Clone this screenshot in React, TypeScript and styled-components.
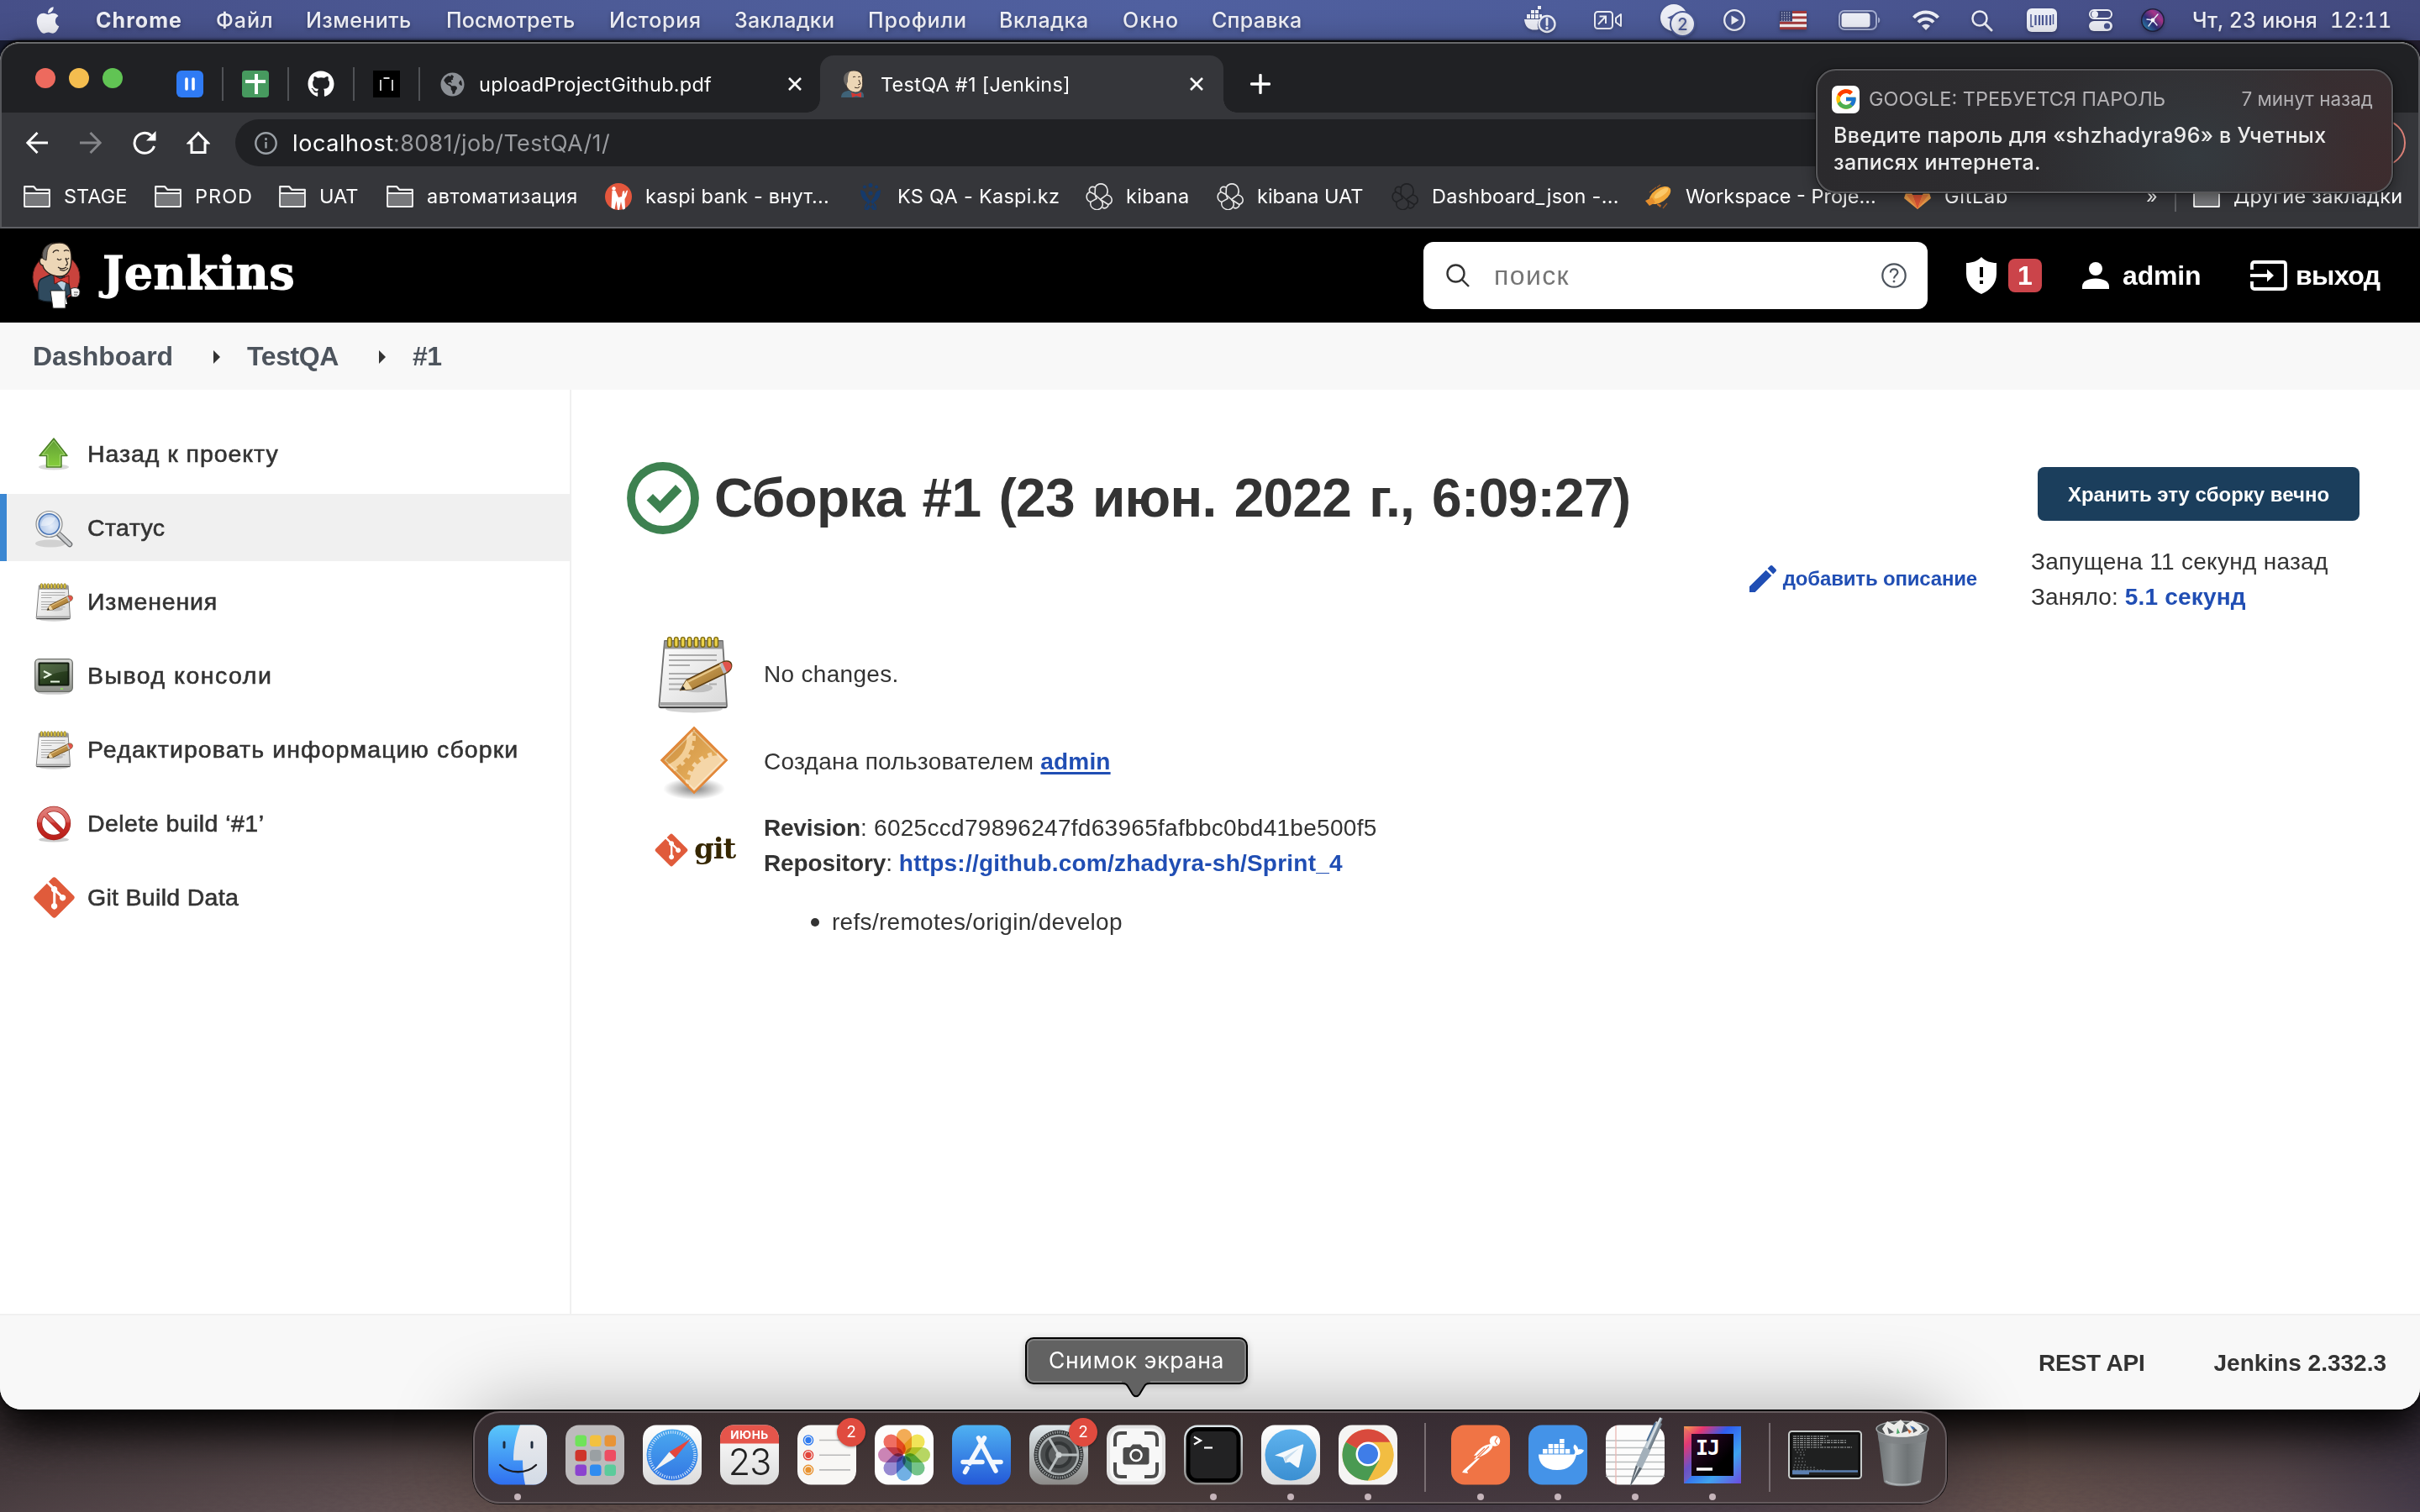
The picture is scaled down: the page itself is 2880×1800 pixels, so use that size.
import React from "react";
import styled, { createGlobalStyle, css } from "styled-components";
import { FaApple, FaGithub, FaGitAlt, FaGlobeAmericas } from "react-icons/fa";
import { FcGoogle } from "react-icons/fc";

const ui = `"Inter", "Noto Sans", sans-serif`;
const web = `"Liberation Sans", Arial, sans-serif`;

const GlobalStyle = createGlobalStyle`
  * { box-sizing: border-box; }
  html, body { margin: 0; padding: 0; }
  body { width: 2880px; height: 1800px; overflow: hidden; background: #2a2226; }
  svg { display: block; flex: none; }
`;

/* ---------- shared ---------- */

const Label = styled.span<{ $ls?: number; $w?: number; $ml?: number }>`
  flex: none;
  white-space: nowrap;
  letter-spacing: ${(p) => p.$ls ?? 0}px;
  ${(p) => p.$w && css`width: ${p.$w}px;`}
  ${(p) => p.$ml && css`margin-left: ${p.$ml}px;`}
`;

const Slot = styled.span<{ $w: number; $h?: number; $ml?: number }>`
  flex: none;
  display: flex;
  align-items: center;
  justify-content: center;
  width: ${(p) => p.$w}px;
  height: ${(p) => p.$h ?? p.$w}px;
  margin-left: ${(p) => p.$ml ?? 0}px;
`;

const Desktop = styled.div`
  position: relative;
  width: 2880px;
  height: 1800px;
  display: flex;
  flex-direction: column;
  overflow: hidden;
  background: linear-gradient(90deg, #1a1e33 0, #241f30 100%);
  font-family: ${ui};
`;

const Ground = styled.div`
  position: absolute;
  left: 0;
  right: 0;
  bottom: 0;
  height: 180px;
  background:
    linear-gradient(180deg, rgba(0, 0, 0, 0.35) 30%, rgba(0, 0, 0, 0) 100%),
    linear-gradient(90deg, #4b3f42 0, #5f5052 14%, #6d5955 22%, #715a54 36%, #6b5753 46%, #4f4450 57%, #594a54 72%, #68544f 84%, #5c4c50 94%, #453b4a 100%);
`;

/* ---------- menu bar ---------- */

const MenuBar = styled.header`
  flex: none;
  height: 48px;
  display: flex;
  align-items: center;
  padding-left: 43px;
  color: #f0f1f7;
  font-size: 25px;
  font-weight: 500;
  text-shadow: 0 2px 5px rgba(0, 0, 0, 0.3);
  background: linear-gradient(90deg, #464f88 0, #4d5b97 25%, #5060a0 48%, #4d5c9a 65%, #464f88 88%, #434a7e 100%);
`;

const AppName = styled(Label)`
  font-weight: 700;
`;

const Clock = styled(Label)`
  font-variant-numeric: tabular-nums;
`;

const StatusIcon = styled.svg<{ $ml: number }>`
  margin-left: ${(p) => p.$ml}px;
  overflow: visible;
  filter: drop-shadow(0 2px 2px rgba(0, 0, 0, 0.25));
`;

const menus: [string, number, number][] = [
  ["Файл", 107, 1],
  ["Изменить", 167, 0.4],
  ["Посмотреть", 194, 0.15],
  ["История", 149, 0.76],
  ["Закладки", 159, 0.21],
  ["Профили", 156, 0.85],
  ["Вкладка", 147, 0.49],
  ["Окно", 106, 0.97],
  ["Справка", 372, 0.29],
];

function TopBar() {
  return (
    <MenuBar>
      <Slot $w={28} $h={40}>
        <FaApple size={36} color="#f0f1f7" />
      </Slot>
      <AppName $ml={43} $w={143} $ls={1.05}>Chrome</AppName>
      {menus.map(([t, w, ls]) => (
        <Label key={t} $w={w} $ls={ls}>{t}</Label>
      ))}
      <StatusIcon $ml={0} width="38" height="32" viewBox="0 0 38 32">
        <g fill="#eceef6">
          <path d="M0 15h18a12 12 0 0 0-1 12c-9 2-16-1-17-12z" />
          <path d="M3 9h4v5H3zM8 9h4v5H8zM13 9h4v5h-4zM8 4h4v4H8zM13 4h4v4h-4zM16 -1h4v4h-4zM18 9h3v4h-3z" />
        </g>
        <circle cx="27" cy="20.5" r="9.5" fill="#4d5c99" stroke="#eceef6" strokeWidth="2.4" />
        <path d="M27 14.5v7" stroke="#eceef6" strokeWidth="2.8" strokeLinecap="round" />
        <circle cx="27" cy="25.5" r="1.7" fill="#eceef6" />
      </StatusIcon>
      <StatusIcon $ml={45} width="33" height="22" viewBox="0 0 33 22" fill="none" stroke="#eceef6" strokeWidth="2">
        <rect x="1" y="1" width="21" height="20" rx="3.5" />
        <path d="M5 16 13 7.5M6.5 6.5H14V15" />
        <path d="M26 8.5 32 4v14l-6-4.5z" strokeLinejoin="round" />
      </StatusIcon>
      <StatusIcon $ml={46} width="40" height="36" viewBox="0 0 40 36">
        <circle cx="16" cy="15" r="16" fill="#eceef6" />
        <path d="M8 15 24 8l-3 14-6-4z" fill="#4d5a96" />
        <circle cx="26.5" cy="22.5" r="14.5" fill="#eceef6" stroke="#4c5a96" strokeWidth="2" />
        <text x="26.5" y="30" textAnchor="middle" fontFamily="Inter" fontSize="20" fill="#4c5a96">2</text>
      </StatusIcon>
      <StatusIcon $ml={35} width="26" height="26" viewBox="0 0 26 26">
        <circle cx="13" cy="13" r="11.8" fill="none" stroke="#eceef6" strokeWidth="2.3" />
        <path d="M9.5 7.5 18.5 13l-9 5.5z" fill="#eceef6" />
      </StatusIcon>
      <StatusIcon $ml={41} width="32" height="22" viewBox="0 0 32 22">
        <rect width="32" height="22" fill="#f4f1f2" />
        {[0, 2, 4, 6].map((i) => (
          <rect key={i} y={i * 3.2} width="32" height="3" fill="#a33a3c" />
        ))}
        <rect width="15" height="12.5" fill="#3b4474" />
        {[2, 5, 8, 11].map((y) =>
          [2, 5, 8, 11].map((x) => <rect key={`${x}-${y}`} x={x} y={y - 0.5} width="1.2" height="1.2" fill="#cfd3e6" />)
        )}
      </StatusIcon>
      <StatusIcon $ml={38} width="50" height="24" viewBox="0 0 50 24">
        <rect x="1" y="1" width="44" height="22" rx="6" fill="none" stroke="#a4add0" strokeWidth="2" />
        <rect x="3.5" y="3.5" width="34" height="17" rx="3.5" fill="#eceef6" />
        <path d="M47 8.500c3 .5 3 6.500 0 7z" fill="#a4add0" />
      </StatusIcon>
      <StatusIcon $ml={38} width="32" height="24" viewBox="0 0 32 24" fill="none" stroke="#eceef6" strokeWidth="4">
        <path d="M1.500 9c8-8.700 21-8.700 29 0" />
        <path d="M7 14.500c5-5.300 13-5.300 18 0" />
        <path d="M16 24l-5-5.300c3-2.700 7-2.700 10 0z" fill="#eceef6" stroke="none" />
      </StatusIcon>
      <StatusIcon $ml={38} width="25" height="25" viewBox="0 0 25 25" fill="none" stroke="#eceef6" strokeWidth="2.5">
        <circle cx="10" cy="10" r="8.5" />
        <path d="m16 16 8 8" strokeLinecap="round" strokeWidth="3" />
      </StatusIcon>
      <StatusIcon $ml={41} width="36" height="28" viewBox="0 0 36 28">
        <rect width="36" height="28" rx="6" fill="#eceef6" />
        <path d="M10.500 8v12M15 8v12M19 8v12M23.500 8v12M28 8v12" stroke="#4b5794" strokeWidth="2.2" />
        <path d="M5 7v14.500h3M31.500 7v12" stroke="#4b5794" strokeWidth="1.5" fill="none" />
      </StatusIcon>
      <StatusIcon $ml={38} width="28" height="26" viewBox="0 0 28 26">
        <rect x="1" y="1" width="26" height="10" rx="5" fill="none" stroke="#eceef6" strokeWidth="2" />
        <circle cx="7" cy="6" r="4" fill="#eceef6" />
        <rect y="14" width="28" height="12" rx="6" fill="#eceef6" />
        <circle cx="21.5" cy="20" r="3.6" fill="#48538e" />
      </StatusIcon>
      <StatusIcon $ml={34} width="28" height="28" viewBox="0 0 28 28">
        <defs>
          <linearGradient id="siri" x1="0" y1="1" x2="1" y2="0">
            <stop offset="0" stopColor="#2e9fc0" />
            <stop offset=".4" stopColor="#2a3078" />
            <stop offset=".7" stopColor="#a83488" />
            <stop offset="1" stopColor="#3a48a8" />
          </linearGradient>
        </defs>
        <circle cx="14" cy="14" r="14" fill="#20203c" />
        <circle cx="14" cy="14" r="12.5" fill="url(#siri)" />
        <path d="M14 14 20 7M14 14 9 21M14 14l5 6M14 14 7 13" stroke="#e8f3ff" strokeWidth="1.4" strokeLinecap="round" />
        <circle cx="14" cy="14" r="2.4" fill="#fff" />
      </StatusIcon>
      <Clock $ml={33} $w={164} $ls={0.1}>Чт, 23 июня</Clock>
      <Clock $ls={0.4}>12:11</Clock>
    </MenuBar>
  );
}

/* ---------- browser window ---------- */

const Window = styled.section`
  position: relative;
  flex: none;
  width: 2880px;
  height: 1630px;
  display: flex;
  flex-direction: column;
  border-top: 2px solid #08080a;
  border-radius: 24px 24px 26px 26px;
  background: #f8f8f8;
  overflow: hidden;
  box-shadow: 0 26px 52px rgba(0, 0, 0, 0.96), 0 0 4px #000;
`;

const ChromeTop = styled.div`
  flex: none;
  height: 222px;
  display: flex;
  flex-direction: column;
  color: #fff;
  background: #202124;
  border: 2px solid #68696b;
  border-left-color: #55565a;
  border-right-color: #55565a;
  border-bottom-color: #5f6064;
  border-radius: 22px 22px 0 0;
`;

const TabStrip = styled.div`
  flex: none;
  height: 82px;
  padding: 14px 0 0 40px;
  display: flex;
  align-items: center;
  font-size: 23.5px;
`;

const Lights = styled.div`
  display: flex;
  gap: 16px;
  margin: -14px 42px 0 0;
`;

const Light = styled.span<{ $c: string }>`
  width: 24px;
  height: 24px;
  border-radius: 50%;
  background: ${(p) => p.$c};
`;

const Pinned = styled.div`
  display: flex;
  align-items: center;
  width: 78px;
  padding-left: 22px;
  &::after {
    content: "";
    width: 2px;
    height: 40px;
    margin-left: 22px;
    background: #505256;
  }
`;

const PinTile = styled.span<{ $c: string; $r: number }>`
  flex: none;
  width: 32px;
  height: 32px;
  border-radius: ${(p) => p.$r}px;
  display: flex;
  align-items: center;
  justify-content: center;
  background: ${(p) => p.$c};
`;

const IdleTab = styled.div`
  display: flex;
  align-items: center;
  padding: 0 22px 0 24px;
`;

const ActiveTab = styled.div`
  position: relative;
  align-self: stretch;
  width: 480px;
  padding-left: 25px;
  display: flex;
  align-items: center;
  background: #35363a;
  border-radius: 16px 16px 0 0;
  &::before,
  &::after {
    content: "";
    position: absolute;
    bottom: 0;
    width: 16px;
    height: 16px;
  }
  &::before {
    left: -16px;
    background: radial-gradient(circle at 0 0, transparent 15.5px, #35363a 16px);
  }
  &::after {
    right: -16px;
    background: radial-gradient(circle at 100% 0, transparent 15.5px, #35363a 16px);
  }
`;

const Toolbar = styled.div`
  flex: none;
  height: 72px;
  padding-left: 10px;
  display: flex;
  align-items: center;
  background: #35363a;
`;

const Omnibox = styled.div`
  width: 2220px;
  height: 56px;
  margin-left: 12px;
  padding-left: 23px;
  display: flex;
  align-items: center;
  border-radius: 28px;
  background: #202124;
  font-size: 27px;
`;

const Dim = styled(Label)`
  color: #9a9ca0;
`;

const UpdatePill = styled.div`
  margin-left: auto;
  margin-right: 15px;
  width: 260px;
  height: 56px;
  border: 2px solid #e0837a;
  border-radius: 28px;
`;

const Bookmarks = styled.div`
  flex: 1;
  padding: 0 0 9px 26px;
  display: flex;
  align-items: center;
  background: #35363a;
  font-size: 23.5px;
  line-height: 28px;
`;

const Bookmark = styled.div<{ $w: number }>`
  flex: none;
  width: ${(p) => p.$w}px;
  display: flex;
  align-items: center;
  gap: 16px;
`;

const Divider = styled.span`
  width: 2px;
  height: 36px;
  margin: 0 20px 0 18px;
  background: #5f6064;
`;

const CloseIcon = () => (
  <svg width="16" height="16" viewBox="0 0 16 16" stroke="#fff" strokeWidth="2.6">
    <path d="M1 1l14 14M15 1 1 15" />
  </svg>
);

const Folder = () => (
  <svg width="32" height="26" viewBox="0 0 32 26">
    <path d="M1.200 24.800V1.200h11l3 3.600h15.600v20z" fill="#35363a" stroke="#f1f1f1" strokeWidth="2.2" strokeLinejoin="round" />
    <path d="M2.500 10h27v13.500h-27z" fill="#77787b" />
    <path d="M1.500 9h29" stroke="#f1f1f1" strokeWidth="2" />
  </svg>
);

const Cluster = ({ c }: { c: string }) => (
  <svg width="32" height="32" viewBox="0 0 32 32" fill="none" stroke={c} strokeWidth="1.6">
    <path d="M11 13.500 11.500 5c2.500-5.500 10.500-5.500 13.500 0 1.500 3 1.500 6 0 9l-7.500 5.500z" />
    <path d="M11 13.500 5 10.500C3 6.500 6 3 11.500 5" />
    <path d="M5 10.500C-.5 13 0 20.500 6 22.500l7-4-2-5" />
    <path d="M6 22.500c-2 7.500 9 13 13.500 5.500 1.500-3 1-6-2-8.500" />
    <path d="M25 14c7 1 8.500 9 2 11.500l-9.500-6" />
    <path d="M27 25.500c0 3.500-4 5.500-7 3.500" />
  </svg>
);

const bookmarkIcons: Record<string, React.ReactNode> = {
  folder: <Folder />,
  kaspi: (
    <svg width="32" height="32" viewBox="0 0 32 32">
      <circle cx="16" cy="16" r="16" fill="#e4573d" />
      <g fill="#fff">
        <circle cx="10.5" cy="6.5" r="2.2" />
        <path d="M8.500 9h4l3.500 8 4-1 1-6 2-1 .5 4 2.500-4.500 1 .5-1.500 6-2 4 .5 11.500c-1.500.7-2.500 1-3 1L19 22l-2 9.800h-2L13.500 21 11.500 31c-1.500-.3-3-1-4-1.700L8 18z" />
      </g>
    </svg>
  ),
  jira: (
    <svg width="32" height="32" viewBox="0 0 32 32" fill="#153a6b">
      <circle cx="16" cy="2.5" r="2.5" />
      <circle cx="9" cy="4.5" r="2" />
      <circle cx="23" cy="4.5" r="2" />
      <path d="M4 8c5 1 6 3 7 7l12 17h-4l-8-10C6 19 4 14 4 8zM28 8c-5 1-6 3-7 7L9 32h4l8-10c5-3 7-8 7-14z" />
      <circle cx="16" cy="12" r="2.6" />
      <path d="M9 32c-1-5 1-8 4-9M23 32c1-5-1-8-4-9" />
    </svg>
  ),
  cluster: <Cluster c="#e8e8e8" />,
  clusterDark: <Cluster c="#202124" />,
  zeppelin: (
    <svg width="32" height="32" viewBox="0 0 32 32">
      <path d="M5 11 13 5M21 30l5-6M14 5l4-3" stroke="#9b5a25" strokeWidth="1.3" />
      <ellipse cx="17.5" cy="14.5" rx="14.5" ry="8" transform="rotate(-35 17.5 14.5)" fill="#f2a93b" />
      <ellipse cx="19" cy="12" rx="10" ry="3.5" transform="rotate(-35 19 12)" fill="#fbc868" />
      <path d="M0 21l8-4 4 6-7 4z" fill="#e58e2c" />
      <path d="M14 24l5 2-1 3-4-3z" fill="#c26c22" />
    </svg>
  ),
  gitlab: (
    <svg width="32" height="30" viewBox="0 0 32 30">
      <path d="M16 30 0 17 5 1l5 12h12L27 1l5 16z" fill="#f0a04b" />
      <path d="M16 30 10 13h12z" fill="#dd5336" />
      <path d="M16 30 3 13h7zM16 30l13-17h-7z" fill="#e87c3c" />
    </svg>
  ),
};

const bookmarkList: [string, string, number, number][] = [
  ["folder", "STAGE", 156, 0],
  ["folder", "PROD", 148, 1.0],
  ["folder", "UAT", 128, 0],
  ["folder", "автоматизация", 260, 0.5],
  ["kaspi", "kaspi bank - внут...", 300, 0.23],
  ["jira", "KS QA - Kaspi.kz", 272, 0.28],
  ["cluster", "kibana", 156, 0.34],
  ["cluster", "kibana UAT", 208, 0],
  ["clusterDark", "Dashboard_json -...", 302, 0.25],
  ["zeppelin", "Workspace - Proje...", 308, 0],
  ["gitlab", "GitLab", 288, 0.72],
];

const JenkinsFace = () => (
  <svg width="30" height="32" viewBox="0 0 30 32">
    <path d="M0 32c0-6 5-8 10-8l13 1c4 1 4 4 4 7z" fill="#3f6277" />
    <path d="M5 14C2 5 8 0 15 0c8 0 11 5 10.500 12 1 8-2 14-8 14S7 22 6 17z" fill="#ecd6b6" stroke="#2b2320" strokeWidth=".8" />
    <path d="M6 18C1 12 2 2 11 1 8 4 8 9 8 13z" fill="#6a6663" />
    <path d="M14 8c1-1 3-1 3 0M20 8c1-1 3-1 3 0M16 20c3 1 5 1 6-1M21 11l2 5-3 1" fill="none" stroke="#3b2c22" strokeWidth="1" />
    <path d="M12 26l6 2 6-2v6l-6-2-5 2z" fill="#d33833" />
  </svg>
);

function BrowserTop() {
  return (
    <ChromeTop>
      <TabStrip>
        <Lights>
          <Light $c="#ed6a5e" />
          <Light $c="#f4bd4f" />
          <Light $c="#61c454" />
        </Lights>
        <Pinned>
          <PinTile $c="#2f7bf5" $r={6}>
            <svg width="14" height="16" viewBox="0 0 14 16" stroke="#fff" strokeWidth="3.6" strokeLinecap="round">
              <path d="M3 2v12M11 2v12" />
            </svg>
          </PinTile>
        </Pinned>
        <Pinned>
          <PinTile $c="#479a5f" $r={4}>
            <svg width="24" height="24" viewBox="0 0 24 24" stroke="#fff" strokeWidth="4">
              <path d="M13 0v24M0 9h24" />
            </svg>
          </PinTile>
        </Pinned>
        <Pinned>
          <FaGithub size={32} />
        </Pinned>
        <Pinned>
          <PinTile $c="#000" $r={0}>
            <svg width="16" height="16" viewBox="0 0 16 16" fill="none" stroke="#ddd" strokeWidth="1.8">
              <path d="M1 3V16M15 3V16M4.500 1h7" />
            </svg>
          </PinTile>
        </Pinned>
        <IdleTab>
          <FaGlobeAmericas size={29} color="#8c9096" />
          <Label $ml={17} $w={368} $ls={0.25}>uploadProjectGithub.pdf</Label>
          <CloseIcon />
        </IdleTab>
        <ActiveTab>
          <JenkinsFace />
          <Label $ml={17} $w={368} $ls={0.25}>TestQA #1 [Jenkins]</Label>
          <CloseIcon />
        </ActiveTab>
        <Slot $w={24} $ml={32}>
          <svg width="24" height="24" viewBox="0 0 24 24" stroke="#fff" strokeWidth="3.4" strokeLinecap="round">
            <path d="M12 1.500v21M1.500 12h21" />
          </svg>
        </Slot>
      </TabStrip>
      <Toolbar>
        <Slot $w={64}>
          <svg width="26" height="26" viewBox="0 0 26 26" fill="none" stroke="#fff" strokeWidth="2.9">
            <path d="M26 13H2.500M13.500 1 1.700 13l11.800 12" />
          </svg>
        </Slot>
        <Slot $w={64}>
          <svg width="26" height="26" viewBox="0 0 26 26" fill="none" stroke="#85868a" strokeWidth="2.9">
            <path d="M0 13h23.500M12.500 1l11.800 12-11.800 12" />
          </svg>
        </Slot>
        <Slot $w={64}>
          <svg width="28" height="28" viewBox="0 0 28 28">
            <path d="M25.500 18A12 12 0 1 1 22 5.300" fill="none" stroke="#fff" strokeWidth="3" />
            <path d="M27.500 0v11.500H16z" fill="#fff" />
          </svg>
        </Slot>
        <Slot $w={64}>
          <svg width="28" height="28" viewBox="0 0 28 28" fill="none" stroke="#fff" strokeWidth="3">
            <path d="M14 2.500 2.800 14H6v11.500h16V14h3.200z" strokeLinejoin="miter" />
          </svg>
        </Slot>
        <Omnibox>
          <svg width="27" height="27" viewBox="0 0 27 27" fill="none" stroke="#9aa0a6" strokeWidth="2.4">
            <circle cx="13.5" cy="13.5" r="12.2" />
            <path d="M13.500 12v7.500M13.500 7v3" />
          </svg>
          <Label $ml={18} $w={120} $ls={0.6}>localhost</Label>
          <Dim $ls={0.35}>:8081/job/TestQA/1/</Dim>
        </Omnibox>
        <UpdatePill />
      </Toolbar>
      <Bookmarks>
        {bookmarkList.map(([icon, text, w, ls]) => (
          <Bookmark key={text} $w={w}>
            {bookmarkIcons[icon]}
            <Label $ls={ls}>{text}</Label>
          </Bookmark>
        ))}
        <Label $w={16}>»</Label>
        <Divider />
        <Bookmark $w={260}>
          <Folder />
          <Label $ls={0.3}>Другие закладки</Label>
        </Bookmark>
      </Bookmarks>
    </ChromeTop>
  );
}

/* ---------- Jenkins page ---------- */

const Page = styled.div`
  flex: 1;
  display: flex;
  flex-direction: column;
  font-family: ${web};
  font-size: 28px;
  color: #333;
`;

const PageHeader = styled.div`
  flex: none;
  height: 112px;
  padding-left: 38px;
  display: flex;
  align-items: center;
  background: #000;
  color: #fff;
  font-size: 32px;
  font-weight: 700;
`;

const Wordmark = styled.span`
  margin: -6px auto 0 26px;
  font-family: "DejaVu Serif", Georgia, serif;
  font-size: 54px;
  letter-spacing: 0.3px;
  -webkit-text-stroke: 1px #fff;
`;

const SearchBox = styled.div`
  width: 600px;
  height: 80px;
  padding: 0 25px 0 27px;
  display: flex;
  align-items: center;
  border-radius: 12px;
  background: #fff;
  color: #757575;
  font-weight: 400;
`;

const Placeholder = styled(Label)`
  flex: 1;
`;

const AlertCount = styled.span`
  width: 40px;
  height: 40px;
  margin-left: 14px;
  border-radius: 8px;
  line-height: 41px;
  text-align: center;
  background: #cb444a;
`;

const Crumbs = styled.nav`
  flex: none;
  height: 80px;
  padding: 1px 0 0 39px;
  display: flex;
  align-items: center;
  background: #f8f8f8;
  color: #4d545d;
  font-size: 32px;
  font-weight: 700;
`;

const CrumbArrow = styled.span`
  border: 8px solid transparent;
  border-left-color: #333;
  border-right-width: 0;
`;

const Body = styled.div`
  flex: none;
  height: 1100px;
  display: flex;
  background: #fff;
`;

const Side = styled.aside`
  flex: none;
  width: 680px;
  padding-top: 36px;
  display: flex;
  flex-direction: column;
  gap: 8px;
  border-right: 2px solid #f0f0f0;
`;

const Task = styled.div<{ $active?: boolean }>`
  height: 80px;
  padding: 1px 0 0 32px;
  display: flex;
  align-items: center;
  gap: 16px;
  border-left: 8px solid ${(p) => (p.$active ? "#3b87d2" : "transparent")};
  background: ${(p) => (p.$active ? "#f0f0f0" : "transparent")};
  font-size: 28.5px;
  -webkit-text-stroke: 0.6px #333;
`;

const Main = styled.main`
  flex: 1;
  display: flex;
`;

const Report = styled.div`
  width: 1673px;
  padding: 85px 0 0 66px;
`;

const TitleRow = styled.h1`
  margin: 0;
  height: 88px;
  display: flex;
  align-items: center;
  gap: 18px;
  font-size: 64px;
  font-weight: 700;
  word-spacing: 4px;
`;

const AddDescription = styled.div`
  height: 40px;
  margin-top: 32px;
  display: flex;
  align-items: center;
  justify-content: flex-end;
  gap: 8px;
  color: #204eb4;
  font-size: 24px;
  font-weight: 700;
`;

const ReportRow = styled.div<{ $mt: number; $top?: boolean }>`
  min-height: 96px;
  margin-top: ${(p) => p.$mt}px;
  padding-left: 30px;
  display: flex;
  align-items: ${(p) => (p.$top ? "flex-start" : "center")};
  gap: 33px;
`;

const IconCell = styled.div<{ $mt?: number }>`
  flex: none;
  width: 100px;
  margin-top: ${(p) => p.$mt ?? 0}px;
  display: flex;
  align-items: center;
  justify-content: center;
`;

const GitWord = styled.span`
  margin: -4px 0 0 5px;
  font: 700 34px/40px "DejaVu Serif", serif;
  letter-spacing: -1.2px;
  color: #362701;
`;

const Line = styled.div`
  line-height: 42px;
  white-space: pre;
`;

const Link = styled.b<{ $ls?: number; $line?: boolean }>`
  color: #204eb4;
  letter-spacing: ${(p) => p.$ls ?? 0}px;
  ${(p) => p.$line && css`
    text-decoration: underline;
    text-decoration-thickness: 3px;
    text-underline-offset: 3px;
    text-decoration-skip-ink: none;
  `}
`;

const RefItem = styled.div`
  margin-top: 28px;
  padding-left: 56px;
  display: flex;
  align-items: center;
  line-height: 42px;
  &::before {
    content: "";
    width: 10px;
    height: 10px;
    margin-right: 15px;
    border-radius: 50%;
    background: #333;
  }
`;

const Facts = styled.div`
  padding: 92px 0 0 64px;
`;

const KeepButton = styled.div`
  width: 383px;
  height: 64px;
  margin: 0 0 28px 8px;
  border-radius: 8px;
  line-height: 65px;
  text-align: center;
  font-size: 24px;
  font-weight: 700;
  color: #fff;
  background: #1b3e5c;
`;

const PageFooter = styled.footer`
  flex: 1;
  padding: 1px 40px 0 0;
  display: flex;
  align-items: center;
  justify-content: flex-end;
  gap: 82px;
  border-top: 2px solid #f0f0f0;
  background: #f8f8f8;
  font-weight: 700;
`;

const Butler = () => (
  <svg width="58" height="80" viewBox="0 0 58 80">
    <circle cx="29" cy="42" r="28" fill="#c9433d" stroke="#5b1f1c" strokeWidth="1" />
    <path d="M11 44c-4 3-4 8-3 24 3 2 7 3 14 3h18c4-6 2-22-2-30l-12-4z" fill="#2f4a5e" stroke="#14202a" strokeWidth="1.4" />
    <path d="M36 40c8 3 9 12 10 22l-8 4z" fill="#2f4a5e" stroke="#14202a" strokeWidth="1.2" />
    <path d="M26 44l8 3 7-2-3 14z" fill="#b8d0e2" />
    <path d="M12 16C14 4 24 1 33 1c10 0 14 8 14 18 0 12-3 22-14 22S14 34 13 28c-5-1-5-10 0-9z" fill="#ecd6b6" stroke="#2a211b" strokeWidth="1.4" />
    <path d="M13 20C11 11 15 3 26 1c-5 3-8 8-8 13l-1 8z" fill="#6b6866" stroke="#2a211b" strokeWidth=".8" />
    <path d="M25 13c1-3 5-4 7-2M38 11c2-2 5-1 6 0M30 20c2 2 4 2 5 0M40 19c1 2 3 2 4 0M40 20c2 4 4 7 0 8M33 33c4 2 8 1 10-2M31 30c4 3 7 2 10 0" fill="none" stroke="#2a211b" strokeWidth="1.2" />
    <path d="M26 40l8 4 10-4v10l-9-4-8 4z" fill="#d23a35" stroke="#5b1410" strokeWidth="1" />
    <path d="M22 58h18v21H25z" fill="#fff" stroke="#222" strokeWidth="1" />
    <path d="M40 66l2 8h-2z" fill="#fff" />
    <path d="M46 56c5-3 12-1 11 4 0 4-3 7-10 5z" fill="#f3f3f3" stroke="#222" strokeWidth="1" />
    <path d="M50 60h5M50 63h4" stroke="#444" strokeWidth=".9" />
  </svg>
);

const Notepad = ({ size }: { size: number }) => (
  <svg width={size} height={size} viewBox="0 0 48 48">
    <defs>
      <linearGradient id="paper" x1="0" y1="0" x2="1" y2="1">
        <stop offset="0" stopColor="#fdfdfd" />
        <stop offset="1" stopColor="#d9d9d9" />
      </linearGradient>
      <linearGradient id="wood" x1="0" y1="0" x2="1" y2="1">
        <stop offset="0" stopColor="#e0b468" />
        <stop offset="1" stopColor="#946722" />
      </linearGradient>
    </defs>
    <ellipse cx="24" cy="44.5" rx="17" ry="2.2" fill="#000" opacity=".18" />
    <path d="M6.500 4H41l2.500 38.500c0 .8-.4 1.200-1 1.200H4.200c-.7 0-1-.4-1-1.200z" fill="url(#paper)" stroke="#6e6e6e" strokeWidth=".9" strokeLinejoin="round" />
    <path d="M6.500 4.300H41l.3 4.400H6.300z" fill="#959595" />
    <path d="M4 40.500h39l.1 2H3.900z" fill="#a5a5a5" />
    <path d="M3.600 43.600h39.600" stroke="#333" strokeWidth=".9" />
    <path d="M9 12.500h28.500M9 15.500h28.500M9 18.500h12.500M9 23.500h20M9 26.500h16M9 29.700h9M9 32.700h8M33 29.700h4.500" stroke="#ababab" strokeWidth="1" />
    {[0, 1, 2, 3, 4, 5, 6, 7].map((i) => (
      <rect key={i} x={8.3 + i * 3.95} y="1.8" width="2.3" height="5.8" rx="1.150" fill="#ecd24a" stroke="#7d6a12" strokeWidth=".7" />
    ))}
    <ellipse cx="26" cy="32" rx="9" ry="2.6" fill="#000" opacity=".16" />
    <path d="M16 33.200 19.500 27.300 41 16.600c2.500-1.200 5-.5 5.300 1.700.3 2.200-1 3.600-3 4.700L23 32.700z" fill="url(#wood)" stroke="#5c3d12" strokeWidth=".8" />
    <path d="M40.800 16.900l2.600 5.700c2.200-1.200 3.100-2.600 2.700-4.200-.6-2-2.800-2.600-5.300-1.500z" fill="#e2544d" />
    <path d="M39 17.800l2.600 5.700 1.800-.9-2.600-5.700z" fill="#b9bcc4" />
    <path d="M20.500 28.300 40 18.500" stroke="#f3d79c" strokeWidth="1" opacity=".8" />
    <path d="M16 33.200l3.500-5.900 3.500 5.400z" fill="#f1d9a8" />
    <path d="M16 33.200l1.400-2.400 1.500 2.100z" fill="#222" />
  </svg>
);

const taskIcons: Record<string, React.ReactNode> = {
  up: (
    <svg width="48" height="48" viewBox="0 0 48 48">
      <defs>
        <linearGradient id="leaf" x1="0" y1="0" x2="0" y2="1">
          <stop offset="0" stopColor="#5f9c35" />
          <stop offset="1" stopColor="#86cf3c" />
        </linearGradient>
      </defs>
      <ellipse cx="24" cy="39" rx="18" ry="3.5" fill="#000" opacity=".15" />
      <path d="M24 5 40 25.500h-7V39H15.500V25.500h-8.500z" fill="url(#leaf)" stroke="#4b7f26" strokeWidth="1.4" strokeLinejoin="round" />
      <path d="M24 7.500 37 24.200h-5.500v13.500H17V24.200h-6.500z" fill="none" stroke="#b5e08a" strokeWidth="1" opacity=".8" />
    </svg>
  ),
  lens: (
    <svg width="48" height="48" viewBox="0 0 48 48">
      <defs>
        <radialGradient id="glass" cx=".6" cy=".6" r=".8">
          <stop offset="0" stopColor="#e6eefa" />
          <stop offset="1" stopColor="#9db9e2" />
        </radialGradient>
      </defs>
      <ellipse cx="20" cy="42" rx="18" ry="4.5" fill="#000" opacity=".13" />
      <path d="M28 29 43 43" stroke="#6c6e70" strokeWidth="6.5" strokeLinecap="round" />
      <path d="M29 29.500 43 43" stroke="#c9cbcd" strokeWidth="4" strokeLinecap="round" />
      <circle cx="18.5" cy="19" r="15.5" fill="#f2f2f0" stroke="#8d8f90" strokeWidth="1.2" />
      <circle cx="18.5" cy="19" r="12.2" fill="url(#glass)" stroke="#4d78b8" strokeWidth="1.6" />
      <path d="M9 21c0-9 8-13 17-9-2 6-8 10-17 9z" fill="#fff" opacity=".45" />
    </svg>
  ),
  notes: <Notepad size={48} />,
  console: (
    <svg width="48" height="48" viewBox="0 0 48 48">
      <defs>
        <linearGradient id="case" x1="0" y1="0" x2="0" y2="1">
          <stop offset="0" stopColor="#d9dad7" />
          <stop offset="1" stopColor="#8c8f88" />
        </linearGradient>
        <linearGradient id="crt" x1="0" y1="0" x2="1" y2="1">
          <stop offset="0" stopColor="#3c5a2b" />
          <stop offset="1" stopColor="#1d2e17" />
        </linearGradient>
      </defs>
      <ellipse cx="24" cy="43.5" rx="19" ry="2.3" fill="#000" opacity=".2" />
      <rect x="1.7" y="3.7" width="44.6" height="38.6" rx="4.5" fill="url(#case)" stroke="#6a6d68" strokeWidth="1.3" />
      <rect x="5.5" y="7.5" width="37" height="28" rx="1.5" fill="#111a0e" />
      <rect x="7.5" y="9.5" width="33" height="24" fill="url(#crt)" />
      <path d="M7.500 9.500h33V18c-14 1-22 5-33 10z" fill="#fff" opacity=".12" />
      <path d="M12 18l8 4-8 4" fill="none" stroke="#e9f6e4" strokeWidth="2" />
      <path d="M20 30.500h11" stroke="#e9f6e4" strokeWidth="2" />
      <rect x="32" y="38" width="3" height="2" fill="#8dd35f" />
    </svg>
  ),
  no: (
    <svg width="48" height="48" viewBox="0 0 48 48">
      <defs>
        <linearGradient id="ban" gradientUnits="userSpaceOnUse" x1="0" y1="3" x2="0" y2="43">
          <stop offset="0" stopColor="#e08681" />
          <stop offset=".45" stopColor="#da5e59" />
          <stop offset=".5" stopColor="#c8302a" />
          <stop offset="1" stopColor="#b81d18" />
        </linearGradient>
      </defs>
      <ellipse cx="24" cy="42.5" rx="18" ry="3" fill="#000" opacity=".2" />
      <circle cx="24" cy="23" r="17" fill="none" stroke="#a3221d" strokeWidth="6.4" />
      <path d="M12.500 11.500 35.500 34.500" stroke="#a3221d" strokeWidth="6" />
      <circle cx="24" cy="23" r="17" fill="none" stroke="url(#ban)" strokeWidth="4.8" />
      <path d="M12 11 36 35" stroke="url(#ban)" strokeWidth="4.5" />
    </svg>
  ),
  git: <FaGitAlt size={55} color="#e05b3b" />,
};

const tasks: [string, string, number][] = [
  ["up", "Назад к проекту", 0.95],
  ["lens", "Статус", 0.4],
  ["notes", "Изменения", 0.8],
  ["console", "Вывод консоли", 1.5],
  ["notes", "Редактировать информацию сборки", 1.1],
  ["no", "Delete build ‘#1’", 0.45],
  ["git", "Git Build Data", 0.3],
];

const UserStart = () => (
  <svg width="96" height="96" viewBox="0 0 96 96">
    <defs>
      <linearGradient id="amber" x1="0" y1="0" x2="1" y2="1">
        <stop offset="0" stopColor="#c98a3a" />
        <stop offset="1" stopColor="#f3bf6c" />
      </linearGradient>
      <radialGradient id="soft">
        <stop offset="0" stopColor="#000" stopOpacity=".5" />
        <stop offset="1" stopColor="#000" stopOpacity="0" />
      </radialGradient>
      <clipPath id="dia">
        <path d="M48 7 87 46 48 85 9 46z" />
      </clipPath>
    </defs>
    <ellipse cx="48" cy="80" rx="37" ry="13" fill="url(#soft)" />
    <path d="M48 6 88 46 48 86 8 46z" fill="url(#amber)" />
    <g clipPath="url(#dia)" fill="none">
      <circle cx="4" cy="18" r="39" stroke="#f3cf98" strokeWidth="7" />
      <circle cx="4" cy="18" r="44" stroke="#f3cf98" strokeWidth="4" strokeDasharray="5 6" />
      <circle cx="78" cy="76" r="36" fill="#f5d6a8" />
      <circle cx="78" cy="76" r="38" stroke="#f5d6a8" strokeWidth="5" strokeDasharray="5 6" />
    </g>
    <path d="M48 7.500 86.500 46 48 84.500 9.500 46z" fill="none" stroke="#e2873a" strokeWidth="2.5" />
    <path d="M48 11.500 82.500 46 48 80.500 13.500 46z" fill="none" stroke="#fff" strokeWidth="1.2" opacity=".4" />
  </svg>
);

function JenkinsPage() {
  return (
    <Page>
      <PageHeader>
        <Butler />
        <Wordmark>Jenkins</Wordmark>
        <SearchBox>
          <svg width="28" height="28" viewBox="0 0 28 28" fill="none" stroke="#333" strokeWidth="2.4">
            <circle cx="11.5" cy="11.5" r="10" />
            <path d="m19 19 8 8" />
          </svg>
          <Placeholder $ml={29} $ls={1.4}>поиск</Placeholder>
          <svg width="30" height="30" viewBox="0 0 30 30" fill="none" stroke="#4d545d" strokeWidth="2.2">
            <circle cx="15" cy="15" r="13.7" />
            <path d="M10.800 11.500c0-5.500 8.600-5.300 8.600-.2 0 3.500-4.400 3.400-4.400 7.200" />
            <circle cx="15" cy="22" r="1" fill="#4d545d" strokeWidth="1" />
          </svg>
        </SearchBox>
        <Slot $w={36} $h={44} $ml={46}>
          <svg width="36" height="44" viewBox="0 0 36 44">
            <path d="M18 0c5 5 11 7 18 7v13c0 12-8 20-18 24C8 40 0 32 0 20V7c7 0 13-2 18-7z" fill="#fff" />
            <path d="M18 12v12M18 28v4" stroke="#000" strokeWidth="4" />
          </svg>
        </Slot>
        <AlertCount>1</AlertCount>
        <Slot $w={32} $ml={48}>
          <svg width="32" height="32" viewBox="0 0 32 32" fill="#fff">
            <circle cx="16" cy="8" r="8" />
            <path d="M0 32v-3c0-6 7-9.500 16-9.500S32 23 32 29v3z" />
          </svg>
        </Slot>
        <Label $ml={16} $w={152} $ls={-0.17}>admin</Label>
        <svg width="44" height="36" viewBox="0 0 44 36" fill="none" stroke="#fff" strokeWidth="3.8">
          <path d="M2 11V5c0-2 1-3 3-3h34c2 0 3 1 3 3v26c0 2-1 3-3 3H5c-2 0-3-1-3-3v-6" />
          <path d="M0 18h24" />
          <path d="M20 10.500 28 18l-8 7.500z" fill="#fff" stroke="none" />
        </svg>
        <Label $ml={10} $w={148} $ls={-0.6}>выход</Label>
      </PageHeader>
      <Crumbs>
        <Label $w={215} $ls={0}>Dashboard</Label>
        <CrumbArrow />
        <Label $ml={32} $w={157} $ls={-0.4}>TestQA</Label>
        <CrumbArrow />
        <Label $ml={32} $ls={-0.6}>#1</Label>
      </Crumbs>
      <Body>
        <Side>
          {tasks.map(([icon, text, ls]) => (
            <Task key={text} $active={icon === "lens"}>
              <Slot $w={48}>{taskIcons[icon]}</Slot>
              <Label $ls={ls}>{text}</Label>
            </Task>
          ))}
        </Side>
        <Main>
          <Report>
            <TitleRow>
              <svg width="86" height="86" viewBox="0 0 86 86">
                <circle cx="43" cy="43" r="38" fill="none" stroke="#3d8150" strokeWidth="9.8" />
                <path d="M23.500 45.500 31 38l8.500 8.500L58 27l7.500 7.500L39.500 61z" fill="#3d8150" />
              </svg>
              <Label $ls={-0.7}>Сборка #1 (23 июн. 2022 г., 6:09:27)</Label>
            </TitleRow>
            <AddDescription>
              <svg width="32" height="32" viewBox="3 3 18 18" fill="#204eb4">
                <path d="M3 17.250V21h3.750L17.810 9.940l-3.750-3.750L3 17.250zM20.710 7.040c.39-.39.39-1.020 0-1.410l-2.340-2.340c-.39-.39-1.020-.39-1.410 0l-1.830 1.830 3.750 3.750 1.830-1.830z" />
              </svg>
              <Label $ls={-0.18}>добавить описание</Label>
            </AddDescription>
            <ReportRow $mt={46}>
              <IconCell><Notepad size={96} /></IconCell>
              <Label $ls={0.3}>No changes.</Label>
            </ReportRow>
            <ReportRow $mt={8}>
              <IconCell><UserStart /></IconCell>
              <Line>
                <Label $ls={0.28}>Создана пользователем </Label>
                <Link $line $ls={0.16}>admin</Link>
              </Line>
            </ReportRow>
            <ReportRow $mt={10} $top>
              <IconCell $mt={25}>
                <FaGitAlt size={44} color="#e05b3b" />
                <GitWord>git</GitWord>
              </IconCell>
              <div>
                <Line>
                  <Label as="b" $ls={-0.23}>Revision</Label>
                  <Label $ls={0.29}>: 6025ccd79896247fd63965fafbbc0bd41be500f5</Label>
                </Line>
                <Line>
                  <Label as="b" $ls={-0.1}>Repository</Label>: <Link $ls={0.22}>https://github.com/zhadyra-sh/Sprint_4</Link>
                </Line>
                <RefItem><Label $ls={0.3}>refs/remotes/origin/develop</Label></RefItem>
              </div>
            </ReportRow>
          </Report>
          <Facts>
            <KeepButton>Хранить эту сборку вечно</KeepButton>
            <Line><Label $ls={0.28}>Запущена 11 секунд назад</Label></Line>
            <Line><Label $ls={0.11}>Заняло: </Label><Link $ls={0.18}>5.1 секунд</Link></Line>
          </Facts>
        </Main>
      </Body>
      <PageFooter>
        <Label $ls={-0.19}>REST API</Label>
        <Label>Jenkins 2.332.3</Label>
      </PageFooter>
    </Page>
  );
}

/* ---------- notification ---------- */

const Notification = styled.div`
  position: absolute;
  left: 2161px;
  top: 82px;
  width: 687px;
  height: 148px;
  padding: 18px 22px 0 17px;
  border: 2px solid #57575a;
  border-radius: 24px;
  background:
    radial-gradient(ellipse 200px 140px at 66% 70%, #343a3f, transparent),
    radial-gradient(ellipse 260px 160px at 100% 80%, #3d2c2e, transparent),
    linear-gradient(90deg, #2b2a2d 0, #2e2d30 50%, #372f32 100%);
  box-shadow: 0 4px 16px rgba(0, 0, 0, 0.4), 0 0 0 1px rgba(0, 0, 0, 0.5);
  color: #ececec;
  font-size: 25px;
  font-weight: 500;
  line-height: 32px;
`;

const NoteHead = styled.div`
  display: flex;
  align-items: center;
  height: 32px;
  margin-bottom: 11px;
  color: #b3b1b4;
  font-size: 23.5px;
  font-weight: 400;
`;

const GoogleTile = styled.span`
  width: 33px;
  height: 33px;
  margin-right: 11px;
  display: flex;
  align-items: center;
  justify-content: center;
  border-radius: 7px;
  background: #fff;
`;

const NoteTime = styled(Label)`
  margin-left: auto;
  font-size: 22.5px;
`;

const NoteLine = styled.div<{ $ls: number }>`
  padding-left: 2px;
  white-space: nowrap;
  letter-spacing: ${(p) => p.$ls}px;
`;

/* ---------- dock ---------- */

const Dock = styled.div`
  position: absolute;
  left: 563px;
  top: 1680px;
  width: 1754px;
  height: 110px;
  padding: 14px 0 0 15px;
  display: flex;
  gap: 20px;
  border: 2px solid #655b5e;
  border-radius: 32px;
  background: linear-gradient(180deg, rgba(20, 10, 12, 0.25), rgba(80, 60, 60, 0.12)), linear-gradient(90deg, #40363a 0, #463a3b 20%, #473a3a 50%, #42373f 65%, #463a40 80%, #473b3c 100%);
  box-shadow: 0 0 100px rgba(0, 0, 0, 0.32), 0 0 0 1px #151214;
`;

const DockItem = styled.div<{ $w?: number; $ml?: number; $open?: boolean }>`
  position: relative;
  flex: none;
  width: ${(p) => p.$w ?? 72}px;
  height: 72px;
  margin-left: ${(p) => p.$ml ?? 0}px;
  svg { overflow: visible; }
  ${(p) => p.$open && css`
    &::after {
      content: "";
      position: absolute;
      left: 32px;
      top: 82px;
      width: 8px;
      height: 8px;
      border-radius: 50%;
      background: #c5b4ba;
    }
  `}
`;

const DockRule = styled.div`
  flex: none;
  width: 2px;
  height: 82px;
  margin: -2px 9px 0 11px;
  background: #796e72;
`;

const Count = styled.span`
  position: absolute;
  top: -8px;
  right: -10px;
  width: 34px;
  height: 34px;
  border-radius: 50%;
  background: #e04b3f;
  box-shadow: 0 1px 3px rgba(0, 0, 0, 0.4);
  color: #fff;
  font-size: 19px;
  line-height: 34px;
  text-align: center;
`;

const Tooltip = styled.div`
  position: absolute;
  left: -96px;
  top: -104px;
  width: 265px;
  height: 56px;
  border: 2px solid #000;
  border-radius: 10px;
  background: #626262;
  box-shadow: inset 0 0 0 2px #828282, 0 2px 8px rgba(0, 0, 0, 0.2);
  color: #fff;
  font-size: 26.5px;
  letter-spacing: 0.7px;
  line-height: 51px;
  text-align: center;
  white-space: nowrap;
`;

const Tail = styled.svg`
  position: absolute;
  left: 112px;
  top: 49px;
`;

const Tile = ({ fill, children }: { fill: string; children?: React.ReactNode }) => (
  <svg width="72" height="72" viewBox="0 0 72 72">
    <rect x="1" y="0.5" width="70" height="71" rx="16" fill={fill} />
    {children}
  </svg>
);

const pads = ["#6fe35a", "#f3c13f", "#e89436", "#cf352b", "#9aa0a3", "#ee4d62", "#8b43cf", "#2f8cf0", "#5ccb9b"];
const petals = ["#f39a2d", "#f0e02f", "#a8cf3d", "#52b66d", "#4e9fe0", "#7d6cc8", "#c166a5", "#ee4b3b"];

const Petal = styled.rect`
  mix-blend-mode: multiply;
  opacity: 0.8;
`;

const Gradients = () => (
  <svg width="0" height="0">
    <defs>
      <linearGradient id="finderL" x1="0" y1="0" x2="0" y2="1"><stop offset="0" stopColor="#5ac8fa" /><stop offset="1" stopColor="#2f6ff0" /></linearGradient>
      <linearGradient id="finderR" x1="0" y1="0" x2="0" y2="1"><stop offset="0" stopColor="#ececee" /><stop offset="1" stopColor="#d3dbe6" /></linearGradient>
      <linearGradient id="store" x1="0" y1="0" x2="0" y2="1"><stop offset="0" stopColor="#4fb2f2" /><stop offset="1" stopColor="#2459d8" /></linearGradient>
      <linearGradient id="white" x1="0" y1="0" x2="0" y2="1"><stop offset="0" stopColor="#ffffff" /><stop offset="1" stopColor="#dcdcdc" /></linearGradient>
      <linearGradient id="steel" x1="0" y1="0" x2="0" y2="1"><stop offset="0" stopColor="#dfe8ec" /><stop offset="1" stopColor="#8b8a88" /></linearGradient>
      <linearGradient id="compass" x1="0" y1="0" x2="0" y2="1"><stop offset="0" stopColor="#4aa9ef" /><stop offset="1" stopColor="#3377e4" /></linearGradient>
      <linearGradient id="tg" x1="0" y1="0" x2="0" y2="1"><stop offset="0" stopColor="#5fb3ee" /><stop offset="1" stopColor="#3b8fd2" /></linearGradient>
      <linearGradient id="ij" x1="0" y1="0" x2="1" y2="1"><stop offset="0" stopColor="#f4a64b" /><stop offset=".18" stopColor="#e8366f" /><stop offset=".4" stopColor="#2f5df0" /><stop offset=".7" stopColor="#3fa3ee" /><stop offset="1" stopColor="#6d4be0" /></linearGradient>
      <linearGradient id="ijIn" x1="0" y1="0" x2="1" y2="1"><stop offset="0" stopColor="#32062e" /><stop offset=".7" stopColor="#000" /></linearGradient>
      <linearGradient id="bin" x1="0" y1="0" x2="1" y2="0"><stop offset="0" stopColor="#6b7072" /><stop offset=".3" stopColor="#8b9092" /><stop offset=".6" stopColor="#6f7476" /><stop offset="1" stopColor="#8d9294" /></linearGradient>
      <linearGradient id="pen" x1="0" y1="0" x2="1" y2="0"><stop offset="0" stopColor="#a9b6c0" /><stop offset=".45" stopColor="#dfe7ec" /><stop offset=".6" stopColor="#8796a2" /><stop offset="1" stopColor="#66727c" /></linearGradient>
    </defs>
  </svg>
);

function DockBar() {
  return (
    <Dock>
      <DockItem $open>
        <Tile fill="url(#finderL)">
          <path d="M39 .5h16c9 0 16 7 16 16v39c0 9-7 16-16 16H45c-2-9-3-18-3-29H31C31 26 34 13 39 .5z" fill="url(#finderR)" />
          <path d="M20 21v6M53 21v6" stroke="#1d2b3d" strokeWidth="3" strokeLinecap="round" />
          <path d="M15 48c11 11 32 11 43 0" fill="none" stroke="#1c1c22" strokeWidth="2.4" strokeLinecap="round" />
        </Tile>
      </DockItem>
      <DockItem>
        <Tile fill="#bdbbbc">
          {pads.map((c, i) => (
            <rect key={c} x={12.5 + (i % 3) * 17.5} y={12.5 + Math.floor(i / 3) * 17.5} width="13.5" height="13.5" rx="3.5" fill={c} />
          ))}
        </Tile>
      </DockItem>
      <DockItem>
        <Tile fill="url(#white)">
          <circle cx="36" cy="36" r="30.5" fill="url(#compass)" />
          <circle cx="36" cy="36" r="27" fill="none" stroke="#dcecfb" strokeWidth="3.5" strokeDasharray="1 1.830" />
          <path d="M58 17 39.500 39.500 32.500 32.500z" fill="#e5473d" />
          <path d="M14 55 32.500 32.500l7 7z" fill="#f3f3f3" />
        </Tile>
      </DockItem>
      <DockItem>
        <Tile fill="url(#white)">
          <path d="M1 22.500v-6c0-9 7-16 16-16h38c9 0 16 7 16 16v6z" fill="#e5554b" />
          <text x="36" y="17" textAnchor="middle" fontFamily="Inter" fontWeight="700" fontSize="13.5" letterSpacing=".5" fill="#fff">ИЮНЬ</text>
          <text x="36" y="60" textAnchor="middle" fontFamily="Inter" fontWeight="300" fontSize="43" letterSpacing="-1" fill="#222">23</text>
        </Tile>
      </DockItem>
      <DockItem>
        <Tile fill="#f8f7f5">
          {["#2e7af0", "#e2443b", "#e8922f"].map((c, i) => (
            <g key={c}>
              <circle cx="14" cy={18.5 + i * 17.7} r="5.6" fill="none" stroke={c} strokeWidth="1.4" />
              <circle cx="14" cy={18.5 + i * 17.7} r="3.7" fill={c} />
              <path d={`M27 ${18.5 + i * 17.7}h37`} stroke="#b9b9b9" strokeWidth="1.6" />
            </g>
          ))}
        </Tile>
        <Count>2</Count>
      </DockItem>
      <DockItem>
        <Tile fill="#fdfdfd">
          {petals.map((c, i) => (
            <Petal key={c} x="27" y="5" width="18" height="30" rx="9" fill={c} transform={`rotate(${i * 45} 36 36)`} />
          ))}
        </Tile>
      </DockItem>
      <DockItem>
        <Tile fill="url(#store)">
          <g stroke="#f4f8fd" strokeWidth="5.5" strokeLinecap="round">
            <path d="M39.500 16 22 46M32.500 16 53 55M14 44.500h23M49 44.500h10M19 52l-2.500 4.500" />
          </g>
        </Tile>
      </DockItem>
      <DockItem>
        <Tile fill="url(#steel)">
          <circle cx="36" cy="36" r="29.5" fill="#303233" />
          <circle cx="36" cy="36" r="27" fill="none" stroke="#8f9596" strokeWidth="3" strokeDasharray="1.5 1.330" />
          <circle cx="36" cy="36" r="23" fill="#4a4d4e" stroke="#aab0b1" strokeWidth="2.6" />
          <circle cx="36" cy="36" r="14" fill="#5c5f60" stroke="#333637" strokeWidth="4" />
          <path d="M36 36h23M36 36 24.500 16M36 36 24.500 56" stroke="#b9bfc0" strokeWidth="3" />
          <circle cx="36" cy="36" r="3.5" fill="#ccd1d2" />
        </Tile>
        <Count>2</Count>
      </DockItem>
      <DockItem>
        <Tile fill="#e3e3e3">
          <rect x="5" y="4.5" width="62" height="63" rx="13" fill="#f7f7f7" />
          <path d="M11 26v-9c0-5 2-7 7-7h7M46 10h8c5 0 7 2 7 7v9M61 45v10c0 5-2 7-7 7h-8M25 62h-7c-5 0-7-2-7-7V45" fill="none" stroke="#4b4b4b" strokeWidth="4" />
          <path d="M23 27h6l3-3.500h9l3 3.500h5c1.500 0 2.500 1 2.500 2.500v15.500c0 1.500-1 2.500-2.500 2.500H23c-1.500 0-2.500-1-2.500-2.500V29.500c0-1.500 1-2.500 2.500-2.500z" fill="#4a4a4a" />
          <circle cx="36" cy="36.5" r="6.5" fill="#4a4a4a" stroke="#fff" strokeWidth="2.5" />
        </Tile>
        <Tooltip>
          Снимок экрана
          <Tail width="36" height="22" viewBox="0 0 36 22">
            <path d="M1 0h34v3h-1c-4 0-5 2-6 4l-6 10c-2 3-6 3-8 0L8 7C7 5 6 3 2 3H1z" fill="#626262" />
            <path d="M0 4h2c4 0 5 1 6 3l6 10c2 3 6 3 8 0l6-10c1-2 2-3 6-3h2" fill="none" stroke="#000" strokeWidth="2" />
          </Tail>
        </Tooltip>
      </DockItem>
      <DockItem $open>
        <Tile fill="url(#steel)">
          <rect x="3.5" y="3" width="65" height="66" rx="13.5" fill="#000" />
          <rect x="8.5" y="8" width="55" height="56" rx="8" fill="#222223" />
          <path d="M13 14.500l8 4.500-8 4.500" fill="none" stroke="#fff" strokeWidth="2.2" />
          <path d="M25 27.500h10" stroke="#fff" strokeWidth="2.2" />
        </Tile>
      </DockItem>
      <DockItem $open>
        <Tile fill="url(#white)">
          <circle cx="36" cy="36" r="30.5" fill="url(#tg)" />
          <path d="M17 36.500 50 23.500c1-.3 1.500.3 1.200 1.500L46 50c-.4 1.500-1.500 1.500-2.500.8l-8.500-6.300-5.500 1-2.500-6.500z" fill="#f5f9fc" />
          <path d="M28 39 46 28 32 41l-1.500 5z" fill="#c5dcee" />
        </Tile>
      </DockItem>
      <DockItem $open>
        <Tile fill="#f5f4f3">
          <circle cx="36" cy="36" r="30.5" fill="#f2bd42" />
          <path d="M36 36 9.600 20.700A30.500 30.500 0 0 1 62.400 20.700z" fill="#d94a3d" />
          <path d="M36 36 9.600 20.700A30.500 30.500 0 0 0 36 66.500L49 43z" fill="#4a9a52" />
          <path d="M36 20.700h26.400A30.500 30.500 0 0 1 36 66.500L49.500 43z" fill="#f2bd42" />
          <circle cx="36" cy="35" r="14.5" fill="#fff" />
          <circle cx="36" cy="35" r="12" fill="#3f7de8" />
        </Tile>
      </DockItem>
      <DockRule />
      <DockItem $open>
        <Tile fill="#f07445">
          <g fill="#fff">
            <circle cx="53" cy="19.5" r="6.2" />
            <path d="M48 23c-9 1-16 8-20 14l4-.5-4 5 8-3.500C43 35 50 30 50.500 25z" />
            <path d="M32 40 16 54l-2 3 7 1-1-3 15-15z" />
          </g>
          <path d="M46 26 32 40M41 28l-9 9M53 20l3-5M53 20l3 4" stroke="#f07445" strokeWidth="1.2" />
        </Tile>
      </DockItem>
      <DockItem $open>
        <Tile fill="#4493e8">
          <g fill="#fff">
            <path d="M13 35.500h41c2 0 3-2 2-5-2-2-2-5 0-7 3 2 4 4 4 6 2-.5 5-.5 7 1-1.500 4-5 5.500-9 5.500-3 12-10 18-23 18-15 0-22-8-22-18.500z" />
            <path d="M18 29h5.500v5.500H18zM24.700 29h5.500v5.500h-5.500zM31.400 29h5.500v5.500h-5.500zM38.100 29h5.500v5.500h-5.500zM44.800 29h5.500v5.500h-5.500zM24.700 23h5.500v5.300h-5.500zM31.400 23h5.500v5.300h-5.500zM38.100 23h5.500v5.300h-5.500zM38.100 17h5.500v5.300h-5.500z" />
          </g>
        </Tile>
      </DockItem>
      <DockItem $open>
        <Tile fill="#fcfcfc">
          <path d="M1 19h70M1 27.500h70M1 36h70M1 44.500h70M1 53h70M1 61.500h70" stroke="#b9bcbd" strokeWidth="1.3" />
          <path d="M13 1v70" stroke="#eab7b3" strokeWidth="1.3" />
          <g transform="translate(67 -8) rotate(24.5)">
            <path d="M-2 0h4v6h2v44h-8V6h2z" fill="url(#pen)" />
            <path d="M-4.500 40h9l-.5 24h-8z" fill="#a3b0ba" />
            <path d="M-4 64h8L1.500 82 0 90l-1.500-8z" fill="#5b666f" />
            <path d="M-1.500 64h2L0 84z" fill="#dfe6ea" />
            <path d="M-4 8v24" stroke="#4b6f95" strokeWidth="2" />
          </g>
        </Tile>
      </DockItem>
      <DockItem $open>
        <svg width="72" height="72" viewBox="0 0 72 72">
          <rect x="2" y="2" width="68" height="68" fill="url(#ij)" />
          <path d="M11 11 2 2v68l9-9z" fill="#d8407a" opacity=".35" />
          <rect x="11" y="11" width="50" height="50" fill="url(#ijIn)" />
          <text x="16" y="36" fontFamily="DejaVu Sans Mono" fontWeight="700" fontSize="25" letterSpacing="-1" fill="#fff">IJ</text>
          <path d="M17 53h19" stroke="#fff" strokeWidth="3.5" />
        </svg>
      </DockItem>
      <DockRule />
      <DockItem $w={88} $ml={-8}>
        <svg width="88" height="72" viewBox="0 0 88 72">
          <rect x="1" y="8" width="86" height="56" rx="3.5" fill="#111" stroke="#c8cccb" strokeWidth="2" />
          <rect x="5" y="12" width="78" height="48" fill="#1f2020" />
          {[14, 16.5, 19, 21.5, 24, 27].map((y, i) => (
            <path key={y} d={`M6 ${y}h${[42, 38, 64, 64, 34, 70][i]}`} stroke="#a4a6a6" strokeWidth="1.2" strokeDasharray="4 1 2 1" />
          ))}
          <path d="M8 30h13M10 33h9M14 36h6M8 40h12M8 44h13M7 48h14M6 51h26M6 54h40" stroke="#77797a" strokeWidth="1.1" strokeDasharray="2 2" />
          <path d="M5 55.500h78M5 58h20" stroke="#5b7fb0" strokeWidth="2.5" />
        </svg>
      </DockItem>
      <DockItem $w={64} $ml={-4}>
        <svg width="64" height="82" viewBox="0 0 64 82">
          <g transform="translate(0 -7)">
            <path d="M2 12 10 75c4 7 40 7 44 0l8-63z" fill="url(#bin)" />
            <ellipse cx="32" cy="12" rx="31" ry="9" fill="#4c4f50" stroke="#a6abad" strokeWidth="1.5" />
            <path d="M8 12 14 3l8 4 8-6 6 6 8-5 10 6 4 6-8 6-12 2H20l-8-3z" fill="#ececea" />
            <path d="M14 10l8 6-6 2zM34 6l6 8-9 3zM44 9l6 5-5 3z" fill="#54585c" />
            <path d="M26 11l3 6-4 1z" fill="#4aa868" />
            <path d="M38 12l5 3-3 3z" fill="#d06a3a" />
            <path d="M41 8l6 3-3 2z" fill="#3b6fb5" />
            <path d="M2 15c10 9 50 9 60 0l-2 12c-14 4-42 4-56 0z" fill="#7d8284" opacity=".75" />
            <path d="M12 74c8 6 32 6 40 0" fill="none" stroke="#b8bdbf" strokeWidth="1.8" opacity=".8" />
          </g>
        </svg>
      </DockItem>
    </Dock>
  );
}

export default function App() {
  return (
    <Desktop>
      <GlobalStyle />
      <Ground>
        <svg width="2880" height="180">
          <filter id="sand" x="0" y="0" width="100%" height="100%">
            <feTurbulence type="fractalNoise" baseFrequency=".12 .3" numOctaves="3" seed="7" />
            <feColorMatrix values="0 0 0 0 .08  0 0 0 0 .05  0 0 0 0 .06  1.4 0 0 0 -.55" />
          </filter>
          <rect width="2880" height="180" filter="url(#sand)" opacity=".4" />
        </svg>
      </Ground>
      <TopBar />
      <Window>
        <BrowserTop />
        <JenkinsPage />
      </Window>
      <Notification>
        <NoteHead>
          <GoogleTile><FcGoogle size={28} /></GoogleTile>
          <Label>GOOGLE: ТРЕБУЕТСЯ ПАРОЛЬ</Label>
          <NoteTime>7 минут назад</NoteTime>
        </NoteHead>
        <NoteLine $ls={0.28}>Введите пароль для «shzhadyra96» в Учетных</NoteLine>
        <NoteLine $ls={0.33}>записях интернета.</NoteLine>
      </Notification>
      <DockBar />
      <Gradients />
    </Desktop>
  );
}
